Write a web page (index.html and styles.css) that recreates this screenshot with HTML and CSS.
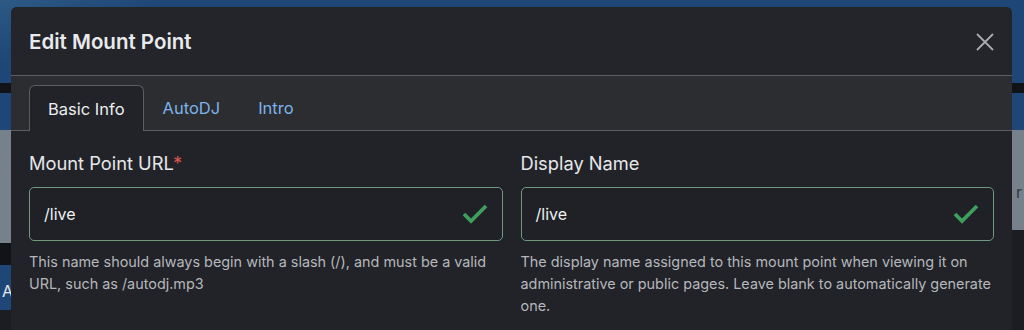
FILE: index.html
```html
<!DOCTYPE html>
<html lang="en">
<head>
	<meta charset="UTF-8">
	<title>Edit Mount Point</title>
	<link rel="stylesheet" href="styles.css">
</head>
<body>

	<!-- page behind the modal -->
	<div class="backdrop">
		<div class="side side-left">
			<div class="blk blue top"></div>
			<div class="blk black thin"></div>
			<div class="blk blue mid"><span>UL</span></div>
			<div class="blk grey big"><span>Mo<br>tr</span></div>
			<div class="blk black band"></div>
			<div class="blk blue low"><span>A</span></div>
		</div>
		<div class="side side-right">
			<div class="blk blue top"></div>
			<div class="blk black thin"></div>
			<div class="blk blue short"></div>
			<div class="blk grey tall"><span>r</span></div>
		</div>
	</div>

	<div class="modal">
		<div class="modal-header">
			<h2>Edit Mount Point</h2>
			<svg class="close" width="18" height="18" viewBox="0 0 18 18">
				<path d="M1 1 L17 17 M17 1 L1 17" stroke="#a9abae" stroke-width="1.8" fill="none"/>
			</svg>
		</div>
		<div class="tabs">
			<div class="tab active">Basic Info</div>
			<div class="tab">AutoDJ</div>
			<div class="tab">Intro</div>
		</div>
		<div class="modal-body">
			<div class="field">
				<label>Mount Point URL<span class="req">*</span></label>
				<div class="input">
					<span>/live</span>
					<svg width="26" height="20" viewBox="0 0 26 20"><path d="M2 10 L9 17 L24 2" stroke="#3e9f5c" stroke-width="3.8" fill="none"/></svg>
				</div>
				<p class="help">This name should always begin with a slash (/), and must be a valid URL, such as /autodj.mp3</p>
			</div>
			<div class="field">
				<label>Display Name</label>
				<div class="input">
					<span>/live</span>
					<svg width="26" height="20" viewBox="0 0 26 20"><path d="M2 10 L9 17 L24 2" stroke="#3e9f5c" stroke-width="3.8" fill="none"/></svg>
				</div>
				<p class="help">The display name assigned to this mount point when viewing it on administrative or public pages. Leave blank to automatically generate one.</p>
			</div>
		</div>
	</div>

</body>
</html>
```

FILE: styles.css
```css
* {
	padding: 0;
	margin: 0;
	box-sizing: border-box;
}
body {
	width: 1024px;
	height: 330px;
	overflow: hidden;
	background: #1b1d21;
	font-family: Inter, Roboto, "Liberation Sans", sans-serif;
	position: relative;
}
/* 背景页面 */
.backdrop {
	display: flex;
	height: 330px;
}
.side {
	width: 512px;
}
.blk {
	color: #e6e8ea;
	font-size: 16px;
	padding-left: 2px;
}
.side-right .blk {
	padding-left: 1016px;
	margin-left: -512px;
	color: #30353b;
}
.blue { background: #1e4676; }
.black { background: #121316; }
.grey { background: #76818c; color: #2a2f35; }
.top { height: 83px; background: linear-gradient(160deg, #2c5a85 0, #1e4676 60px); }
.thin { height: 10px; }
.mid { height: 65px; padding-top: 28px; }
.big { height: 85px; padding-top: 24px; line-height: 25px; color: #262a2f; }
.band { height: 22px; }
.low { height: 45px; padding-top: 16px; }
.short { height: 37px; }
.tall { height: 100px; padding-top: 52px; }

.modal {
	position: absolute;
	left: 11px;
	top: 7px;
	width: 1001px;
	height: 323px;
	background: #212328;
	border-radius: 6px 6px 0 0;
	overflow: hidden;
	color: #e9eaec;
}
.modal-header {
	height: 69px;
	padding: 0 18px;
	display: flex;
	align-items: center;
	justify-content: space-between;
	background: #23252a;
	border-bottom: 1px solid #5a5d61;
}
.modal-header h2 {
	font-size: 20.5px;
	font-weight: 600;
	padding-top: 1px;
}
.close {
	margin-top: 2px;
}
.tabs {
	height: 55px;
	padding: 9px 18px 0;
	display: flex;
	align-items: flex-end;
	background: #2b2d31;
	border-bottom: 1px solid #5a5d61;
}
.tab {
	height: 45px;
	padding: 0 18px;
	display: flex;
	align-items: center;
	font-size: 16.5px;
	color: #7fb2ea;
	margin-right: 0;
	border: 1px solid transparent;
	border-bottom: none;
}
.tab.active {
	color: #eceef0;
	background: #212328;
	border-color: #5a5d61;
	border-radius: 6px 6px 0 0;
	margin-bottom: -1px;
	height: 46px;
}
.modal-body {
	display: flex;
	gap: 18px;
	padding: 20px 18px 0;
}
.field {
	flex: 1;
}
.field label {
	display: block;
	font-size: 18.3px;
	line-height: 24px;
	color: #e6e7e9;
}
.req {
	color: #d9534f;
}
.input {
	margin-top: 12px;
	height: 54px;
	border: 1px solid #6f9a80;
	border-radius: 5px;
	display: flex;
	align-items: center;
	justify-content: space-between;
	padding: 0 14px;
	font-size: 16px;
	color: #eef0f2;
	background: #1f2126;
}
.help {
	margin-top: 10px;
	font-size: 14.4px;
	line-height: 22px;
	color: #b5b7bb;
}
```
